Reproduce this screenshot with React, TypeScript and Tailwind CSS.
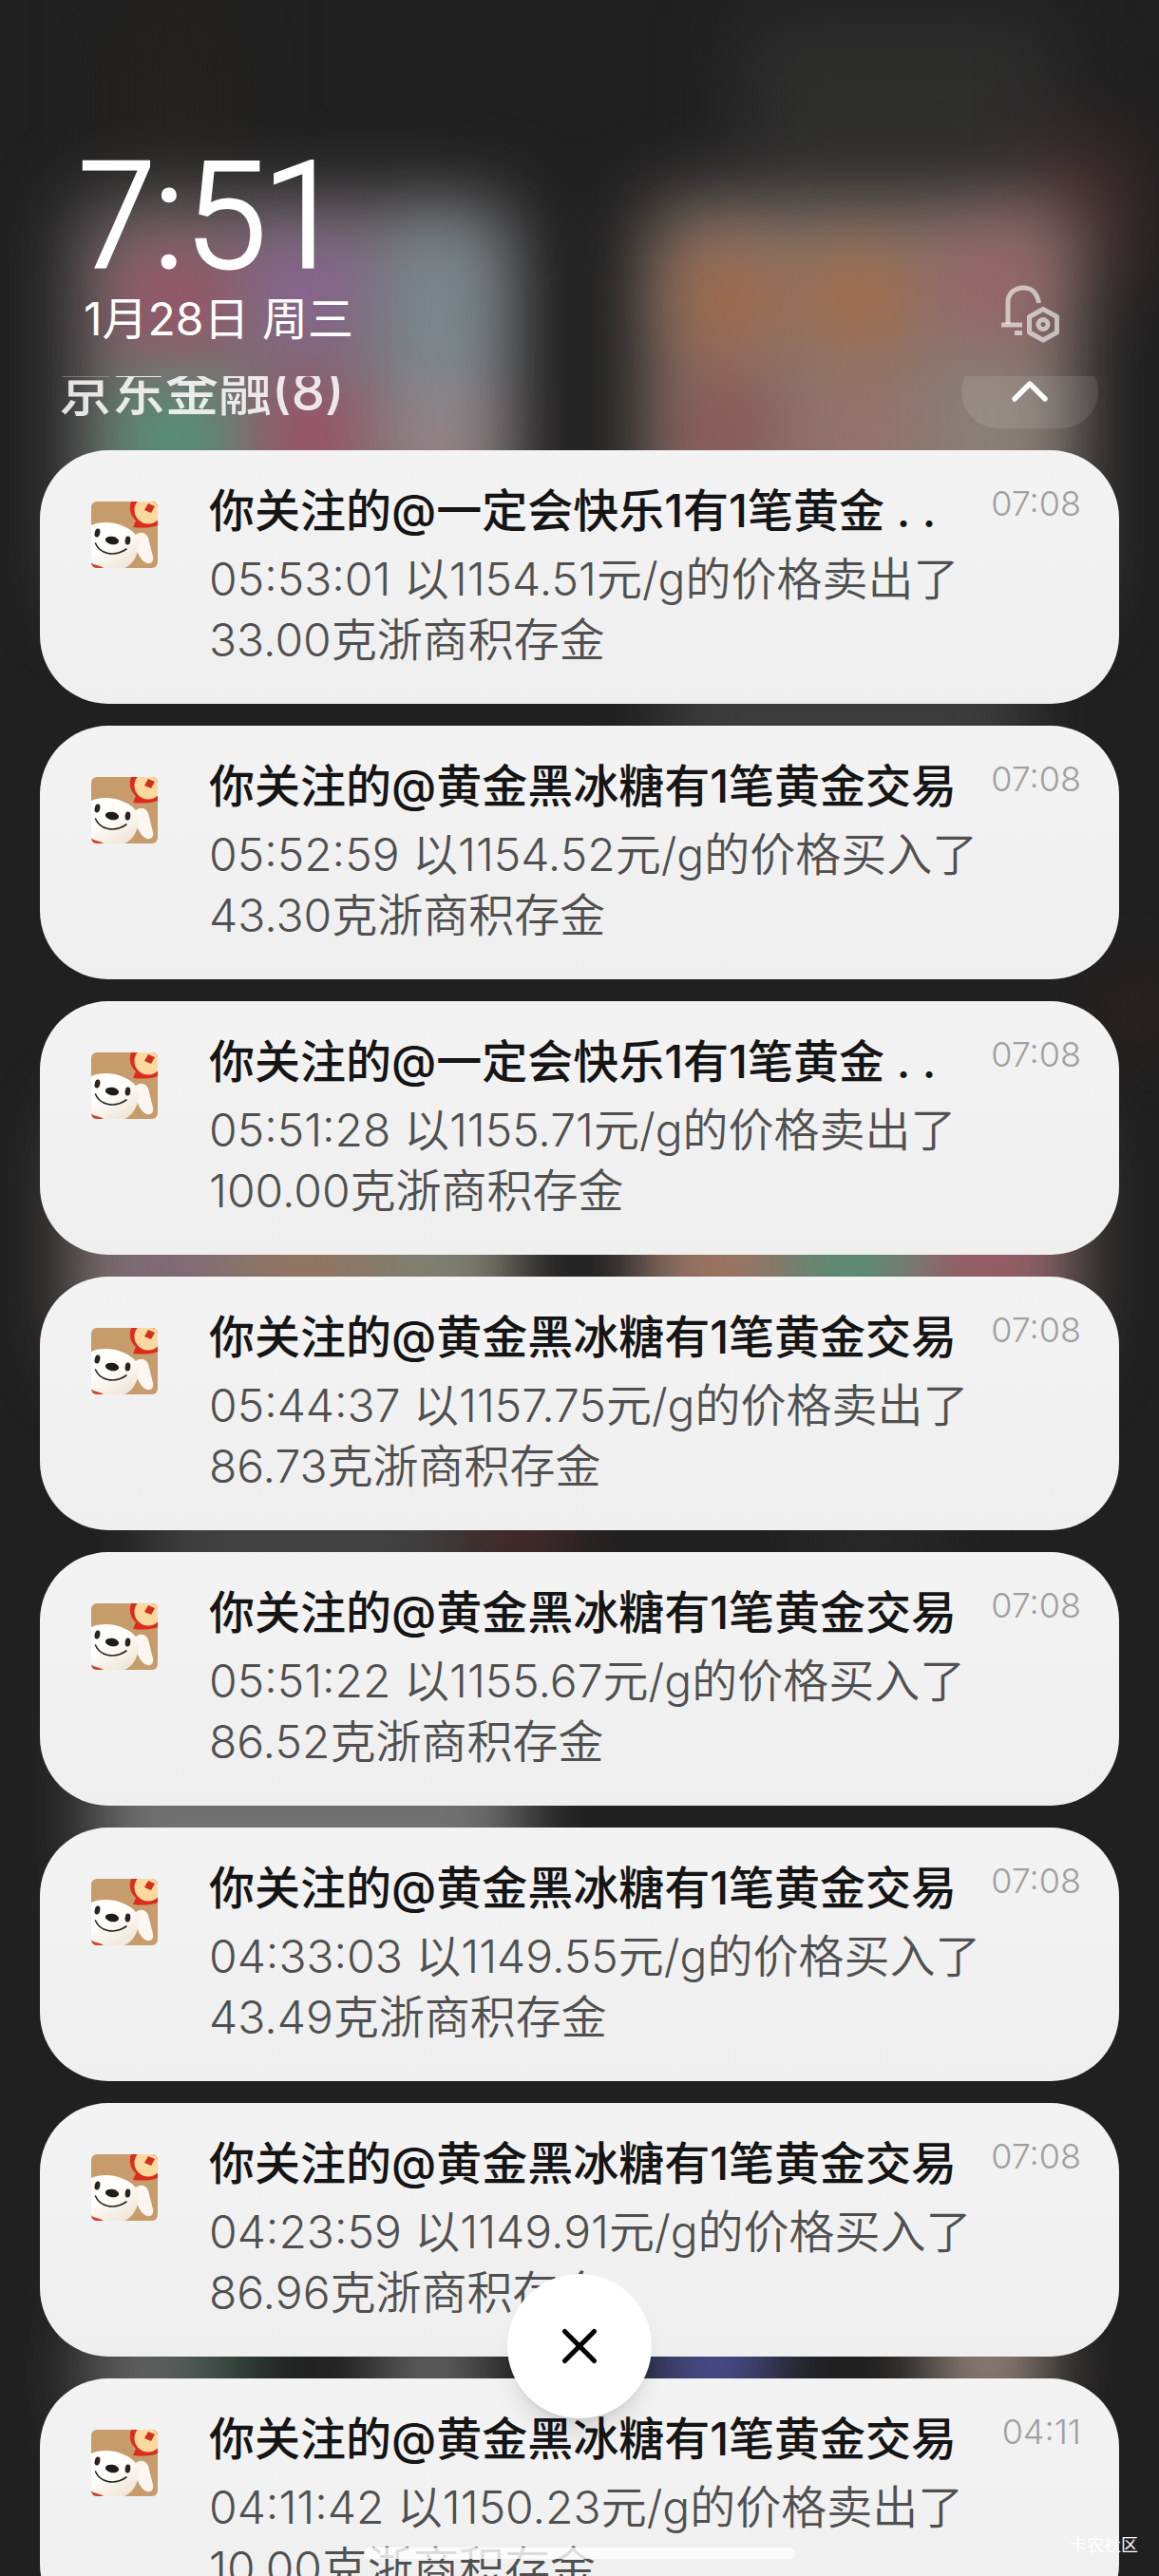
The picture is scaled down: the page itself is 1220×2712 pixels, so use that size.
import { ChevronUp, X } from "lucide-react";

type Notification = {
  title: string;
  body: string;
  time: string;
};

const notifications: Notification[] = [
  {
    title: "你关注的@一定会快乐1有1笔黄金 . .",
    body: "05:53:01 以1154.51元/g的价格卖出了33.00克浙商积存金",
    time: "07:08",
  },
  {
    title: "你关注的@黄金黑冰糖有1笔黄金交易",
    body: "05:52:59 以1154.52元/g的价格买入了43.30克浙商积存金",
    time: "07:08",
  },
  {
    title: "你关注的@一定会快乐1有1笔黄金 . .",
    body: "05:51:28 以1155.71元/g的价格卖出了100.00克浙商积存金",
    time: "07:08",
  },
  {
    title: "你关注的@黄金黑冰糖有1笔黄金交易",
    body: "05:44:37 以1157.75元/g的价格卖出了86.73克浙商积存金",
    time: "07:08",
  },
  {
    title: "你关注的@黄金黑冰糖有1笔黄金交易",
    body: "05:51:22 以1155.67元/g的价格买入了86.52克浙商积存金",
    time: "07:08",
  },
  {
    title: "你关注的@黄金黑冰糖有1笔黄金交易",
    body: "04:33:03 以1149.55元/g的价格买入了43.49克浙商积存金",
    time: "07:08",
  },
  {
    title: "你关注的@黄金黑冰糖有1笔黄金交易",
    body: "04:23:59 以1149.91元/g的价格买入了86.96克浙商积存金",
    time: "07:08",
  },
  {
    title: "你关注的@黄金黑冰糖有1笔黄金交易",
    body: "04:11:42 以1150.23元/g的价格卖出了10.00克浙商积存金",
    time: "04:11",
  },
];

// Blurred home screen behind the shade
const Wallpaper = () => (
  <svg
    className="absolute inset-0 h-full w-full"
    viewBox="0 0 1220 2712"
    preserveAspectRatio="none"
    aria-hidden="true"
  >
    <defs>
      <filter id="soft" x="-50%" y="-50%" width="200%" height="200%" colorInterpolationFilters="sRGB">
        <feGaussianBlur stdDeviation="36" />
      </filter>
      <filter id="softer" x="-50%" y="-50%" width="200%" height="200%" colorInterpolationFilters="sRGB">
        <feGaussianBlur stdDeviation="42" />
      </filter>
    </defs>
    <rect width="1220" height="2712" fill="#202020" />
    <g filter="url(#softer)">
      <rect x="780" y="20" width="330" height="170" fill="#2e2e2d" />
      <rect x="130" y="0" width="110" height="200" fill="#242320" />
      <rect x="1080" y="150" width="110" height="150" fill="#452c2d" />
      <rect x="85" y="215" width="450" height="420" fill="#777272" />
      <rect x="685" y="215" width="445" height="420" fill="#857872" />
      <rect x="85" y="1180" width="450" height="250" fill="#847a72" />
      <rect x="685" y="1180" width="440" height="250" fill="#847672" />
    </g>
    <g filter="url(#soft)" opacity="0.8">
      <rect x="125" y="260" width="120" height="110" fill="#a04c64" />
      <rect x="270" y="250" width="110" height="110" fill="#8d5f98" />
      <rect x="410" y="240" width="110" height="180" fill="#7b8e96" />
      <rect x="125" y="410" width="120" height="110" fill="#4b9a78" />
      <rect x="270" y="400" width="110" height="120" fill="#a44a66" />
      <rect x="410" y="410" width="110" height="110" fill="#9d8a8e" />
      <rect x="710" y="260" width="110" height="110" fill="#a5643f" />
      <rect x="850" y="260" width="110" height="110" fill="#a9693f" />
      <rect x="990" y="240" width="110" height="120" fill="#9c5f66" />
      <rect x="710" y="395" width="110" height="120" fill="#8b5050" />
      <rect x="850" y="400" width="110" height="120" fill="#9c716b" />
      <rect x="990" y="380" width="110" height="140" fill="#8c8379" />
      <rect x="700" y="700" width="380" height="110" fill="#484848" />
      <rect x="110" y="1240" width="130" height="180" fill="#7e6676" />
      <rect x="250" y="1240" width="140" height="180" fill="#937560" />
      <rect x="410" y="1240" width="100" height="180" fill="#7c8270" />
      <rect x="700" y="1240" width="110" height="180" fill="#a4735b" />
      <rect x="840" y="1240" width="110" height="180" fill="#4f9274" />
      <rect x="985" y="1240" width="110" height="180" fill="#9c5260" />
      <rect x="160" y="1580" width="320" height="90" fill="#555" />
      <rect x="490" y="1590" width="110" height="60" fill="#6a3636" />
      <rect x="840" y="1590" width="150" height="60" fill="#303030" />
      <rect x="100" y="1810" width="450" height="190" fill="#858585" />
      <rect x="1170" y="1030" width="50" height="70" fill="#3c2424" />
      <rect x="90" y="2430" width="120" height="130" fill="#747474" />
      <rect x="210" y="2430" width="60" height="130" fill="#3a5a4c" />
      <rect x="400" y="2430" width="110" height="130" fill="#727272" />
      <rect x="690" y="2420" width="120" height="130" fill="#555bac" />
      <rect x="980" y="2420" width="120" height="130" fill="#b09c90" />
    </g>
  </svg>
);

const BellSettingsIcon = () => (
  <svg
    className="h-[62px] w-16"
    viewBox="0 0 64 62"
    fill="none"
    stroke="currentColor"
    strokeWidth="5"
    strokeLinejoin="round"
    aria-hidden="true"
  >
    <path d="M2 42H24M16 50.500H24" />
    <path d="M9 41V18.500C9 9 16 3 25.500 3C34 3 40 9 41.500 19" />
    <path d="M46 25.500L60.500 33.500V50L46 58L31.500 50V33.500Z" />
    <circle cx="46" cy="41.500" r="5" />
  </svg>
);

const AppIcon = () => (
  <svg
    className="mt-[22px] h-[70px] w-[70px] shrink-0 rounded-md"
    viewBox="0 0 70 70"
    aria-hidden="true"
  >
    <defs>
      <linearGradient id="fur" x1="0" y1="0" x2="0.6" y2="1">
        <stop offset="0.5" stopColor="#fffefb" />
        <stop offset="1" stopColor="#f0e7da" />
      </linearGradient>
    </defs>
    <rect width="70" height="70" fill="#c79c6c" />
    <path d="M42 0C39 8 42 16 47 20L44 27C53 28 62 28 70 25V0Z" fill="#dd2c1c" />
    <circle cx="60" cy="9" r="14.500" fill="#fbd9a0" />
    <path d="M60 2L67 5L63 12L56 9Z" fill="#d2301c" />
    <path
      d="M47 35C52 31 58 33 60 38L65 58C66 63 63 66 59 65C52 63 49 54 46 46Z"
      fill="#fbf7f0"
    />
    <path
      d="M0 25C8 21 24 21 34 26C46 31 52 39 50 48C48 60 42 67 35 70H6L0 64Z"
      fill="url(#fur)"
    />
    <path d="M0 65C4 67 9 67 13 70H0Z" fill="#d4402c" />
    <ellipse cx="6.500" cy="33" rx="2.800" ry="4.600" transform="rotate(12 6.500 33)" fill="#2b2320" />
    <ellipse cx="38.500" cy="41" rx="2.800" ry="4.600" transform="rotate(6 38.500 41)" fill="#2b2320" />
    <ellipse cx="22" cy="41" rx="7.200" ry="4.200" transform="rotate(10 22 41)" fill="#211b19" />
    <path
      d="M4.500 44C9 55 24 59 37 50"
      fill="none"
      stroke="#2b2320"
      strokeWidth="1.600"
      strokeLinecap="round"
    />
  </svg>
);

const NotificationCard = ({ title, body, time }: Notification) => (
  <li className="flex shrink-0 gap-[54px] rounded-[72px] bg-linear-to-b from-[#f3f3f3] to-[#efefef] pt-8 pr-10 pb-[35px] pl-[54px]">
    <AppIcon />
    <div className="min-w-0 flex-1">
      <div className="flex items-start justify-between">
        <h2 className="text-[48px] leading-[64px] font-medium whitespace-nowrap text-[#151515]">
          {title}
        </h2>
        <time className="text-[36px] leading-[48px] font-light text-[#a0a0a0]">
          {time}
        </time>
      </div>
      <p className="mt-2 pr-[72px] text-[48px] leading-[64px] font-[350] text-[#505050]">
        {body}
      </p>
    </div>
  </li>
);

export default function App() {
  return (
    <div className="relative flex h-screen flex-col overflow-hidden bg-[#202020] font-[Inter,'Noto_Sans_CJK_SC',sans-serif]">
      <Wallpaper />

      <header className="relative flex items-end justify-between pt-[150px] pr-[104px] pb-[30px] pl-[84px] text-white">
        <div>
          <h1 className="font-[Roboto] text-[156px] leading-[156px] font-light [-webkit-text-stroke:3px_white] [font-feature-settings:'pnum']">
            7:51
          </h1>
          <p className="pl-1 text-[48px] leading-[60px]">1月28日 周三</p>
        </div>
        <button type="button" aria-label="通知设置" className="mb-1 text-white/60">
          <BellSettingsIcon />
        </button>
      </header>

      <main className="relative flex min-h-0 flex-1 flex-col overflow-hidden px-[42px]">
        {/* group header is scrolled halfway under the clock */}
        <div className="-mt-[23px] flex h-[78px] shrink-0 items-center justify-between pr-[22px] pl-5">
          <h2 className="text-[56px] leading-[78px] font-medium text-white/85">京东金融(8)</h2>
          <button
            type="button"
            aria-label="收起"
            className="flex h-[78px] w-36 items-center justify-center rounded-full bg-white/10 text-white"
          >
            <ChevronUp className="h-16 w-16" strokeWidth={2} />
          </button>
        </div>
        <ul className="mt-[23px] flex flex-col gap-[23px]">
          {notifications.map((item, index) => (
            <NotificationCard key={index} {...item} />
          ))}
        </ul>
      </main>

      <button
        type="button"
        aria-label="清除全部"
        className="absolute bottom-[166px] left-1/2 flex h-[152px] w-[152px] -translate-x-1/2 items-center justify-center rounded-full bg-white text-black shadow-xl"
      >
        <X className="h-[62px] w-[62px]" strokeWidth={2} />
      </button>
      <div className="absolute bottom-[18px] left-1/2 h-3 w-[454px] -translate-x-1/2 rounded-full bg-white/80" />
      <span className="absolute right-[22px] bottom-5 text-[18px] leading-6 text-white">
        卡农社区
      </span>
    </div>
  );
}
